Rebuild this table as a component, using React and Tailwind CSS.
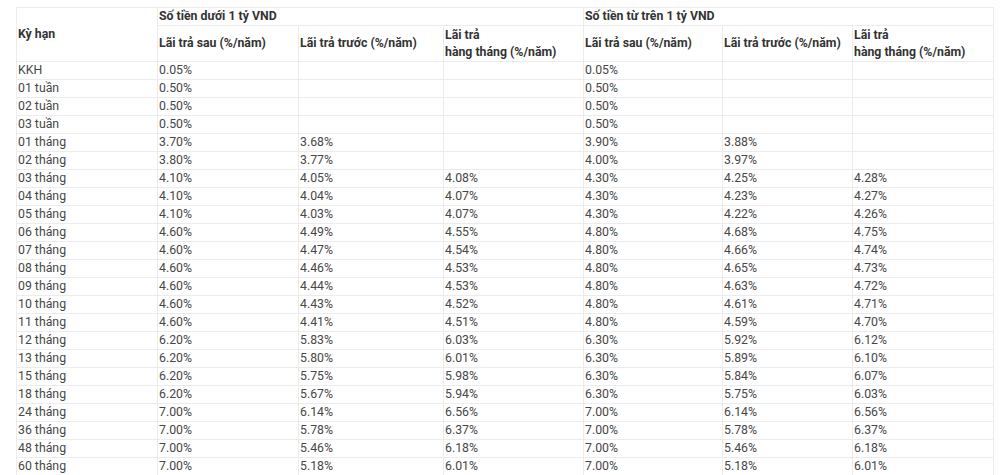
const rows = [
  ["KKH", "0.05%", "", "", "0.05%", "", ""],
  ["01 tuần", "0.50%", "", "", "0.50%", "", ""],
  ["02 tuần", "0.50%", "", "", "0.50%", "", ""],
  ["03 tuần", "0.50%", "", "", "0.50%", "", ""],
  ["01 tháng", "3.70%", "3.68%", "", "3.90%", "3.88%", ""],
  ["02 tháng", "3.80%", "3.77%", "", "4.00%", "3.97%", ""],
  ["03 tháng", "4.10%", "4.05%", "4.08%", "4.30%", "4.25%", "4.28%"],
  ["04 tháng", "4.10%", "4.04%", "4.07%", "4.30%", "4.23%", "4.27%"],
  ["05 tháng", "4.10%", "4.03%", "4.07%", "4.30%", "4.22%", "4.26%"],
  ["06 tháng", "4.60%", "4.49%", "4.55%", "4.80%", "4.68%", "4.75%"],
  ["07 tháng", "4.60%", "4.47%", "4.54%", "4.80%", "4.66%", "4.74%"],
  ["08 tháng", "4.60%", "4.46%", "4.53%", "4.80%", "4.65%", "4.73%"],
  ["09 tháng", "4.60%", "4.44%", "4.53%", "4.80%", "4.63%", "4.72%"],
  ["10 tháng", "4.60%", "4.43%", "4.52%", "4.80%", "4.61%", "4.71%"],
  ["11 tháng", "4.60%", "4.41%", "4.51%", "4.80%", "4.59%", "4.70%"],
  ["12 tháng", "6.20%", "5.83%", "6.03%", "6.30%", "5.92%", "6.12%"],
  ["13 tháng", "6.20%", "5.80%", "6.01%", "6.30%", "5.89%", "6.10%"],
  ["15 tháng", "6.20%", "5.75%", "5.98%", "6.30%", "5.84%", "6.07%"],
  ["18 tháng", "6.20%", "5.67%", "5.94%", "6.30%", "5.75%", "6.03%"],
  ["24 tháng", "7.00%", "6.14%", "6.56%", "7.00%", "6.14%", "6.56%"],
  ["36 tháng", "7.00%", "5.78%", "6.37%", "7.00%", "5.78%", "6.37%"],
  ["48 tháng", "7.00%", "5.46%", "6.18%", "7.00%", "5.46%", "6.18%"],
  ["60 tháng", "7.00%", "5.18%", "6.01%", "7.00%", "5.18%", "6.01%"],
];

const th = "border border-[#ececec] px-[1px] text-left align-middle font-bold leading-[17px] text-[#333]";
const td = "border border-[#ececec] px-[1px] py-0 align-middle leading-[15px] text-[#474747]";

function SubHeads() {
  return (
    <>
      <th className={th}>Lãi trả sau (%/năm)</th>
      <th className={th}>Lãi trả trước (%/năm)</th>
      <th className={th}>
        Lãi trả
        <br />
        hàng tháng (%/năm)
      </th>
    </>
  );
}

export default function App() {
  return (
    <div className="min-h-[475px] bg-white pl-[16px] pt-[7px] font-['Roboto',sans-serif] text-[12.3px]">
      <table className="table-fixed border-collapse">
        <colgroup>
          <col className="w-[141px]" />
          <col className="w-[141px]" />
          <col className="w-[145px]" />
          <col className="w-[140px]" />
          <col className="w-[139px]" />
          <col className="w-[130px]" />
          <col className="w-[141px]" />
        </colgroup>
        <thead>
          <tr className="h-[18px]">
            <th rowSpan={2} className={th}>
              Kỳ hạn
            </th>
            <th colSpan={3} className={th}>
              Số tiền dưới 1 tỷ VND
            </th>
            <th colSpan={3} className={th}>
              Số tiền từ trên 1 tỷ VND
            </th>
          </tr>
          <tr className="h-[36px]">
            <SubHeads />
            <SubHeads />
          </tr>
        </thead>
        <tbody>
          {rows.map((r) => (
            <tr key={r[0]} className="h-[18px]">
              {r.map((c, i) => (
                <td key={i} className={td}>
                  {c}
                </td>
              ))}
            </tr>
          ))}
        </tbody>
      </table>
    </div>
  );
}
